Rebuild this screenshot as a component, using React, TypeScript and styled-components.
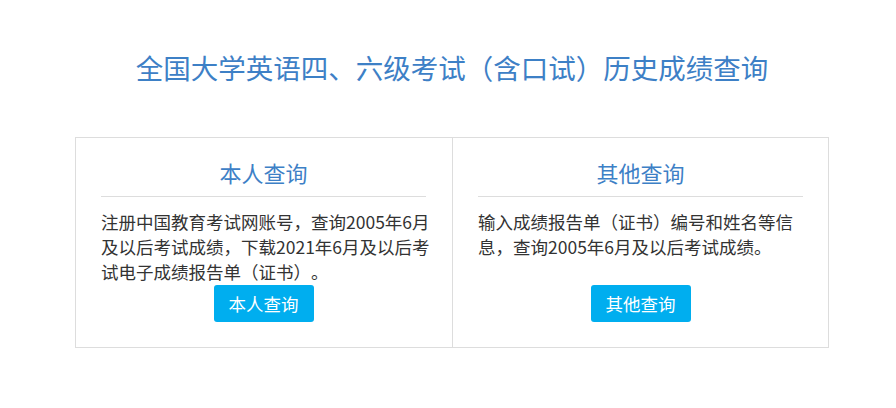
import styled, { createGlobalStyle } from 'styled-components';

const GlobalStyle = createGlobalStyle`
  html, body {
    margin: 0;
    padding: 0;
    background: #fff;
  }
  body {
    font-family: "Noto Sans CJK SC", "Noto Sans", sans-serif;
    text-spacing-trim: space-all;
  }
`;

const Page = styled.div`
  padding: 47px 0 0 8px;
`;

const Title = styled.h1`
  margin: 0;
  font-size: 27.5px;
  line-height: 40px;
  font-weight: 400;
  color: #3d80c6;
  text-align: center;
`;

const Panel = styled.div`
  width: 752px;
  margin: 50px auto 0;
  border: 1px solid #dddddd;
  display: grid;
  grid-template-columns: 1fr 1fr;
`;

const Column = styled.div<{ $divider?: boolean }>`
  display: flex;
  flex-direction: column;
  padding: 0 20px 25px 25px;
  border-right: ${(p) => (p.$divider ? '1px solid #dddddd' : 'none')};
`;

const Heading = styled.h2`
  margin: 0 6px 0 0;
  padding: 19px 0 9px;
  font-size: 22px;
  line-height: 30px;
  font-weight: 400;
  color: #3d80c6;
  text-align: center;
  border-bottom: 1px solid #dddddd;
`;

const Text = styled.p`
  width: 331px;
  min-height: 75px;
  margin: 12px 0 0;
  font-size: 17.5px;
  line-height: 25px;
  color: #333333;
`;

const Button = styled.button`
  align-self: center;
  margin: 1px 6px 0 0;
  width: 100px;
  height: 37px;
  padding: 0;
  border: none;
  border-radius: 3px;
  background: #00aeef;
  color: #ffffff;
  font-family: inherit;
  font-size: 17.5px;
  cursor: pointer;
`;

const cards = [
  {
    title: '本人查询',
    text: '注册中国教育考试网账号，查询2005年6月及以后考试成绩，下载2021年6月及以后考试电子成绩报告单（证书）。',
  },
  {
    title: '其他查询',
    text: '输入成绩报告单（证书）编号和姓名等信息，查询2005年6月及以后考试成绩。',
  },
];

export default function App() {
  return (
    <Page>
      <GlobalStyle />
      <Title>全国大学英语四、六级考试（含口试）历史成绩查询</Title>
      <Panel>
        {cards.map((c, i) => (
          <Column key={c.title} $divider={i === 0}>
            <Heading>{c.title}</Heading>
            <Text>{c.text}</Text>
            <Button>{c.title}</Button>
          </Column>
        ))}
      </Panel>
    </Page>
  );
}
